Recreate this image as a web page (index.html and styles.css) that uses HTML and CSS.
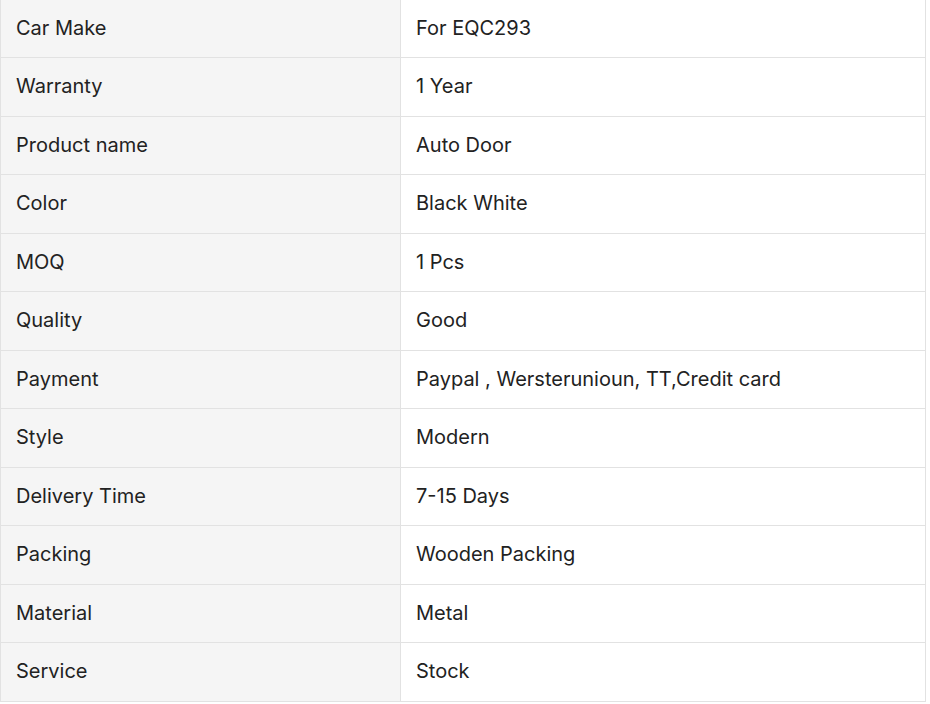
FILE: index.html
```html
<!DOCTYPE html>
<html>
<head>
<meta charset="utf-8">
<link rel="stylesheet" href="styles.css">
</head>
<body>
<table class="spec">
<tbody>
<tr><td class="k">Car Make</td><td class="v">For EQC293</td></tr>
<tr><td class="k">Warranty</td><td class="v">1 Year</td></tr>
<tr><td class="k">Product name</td><td class="v">Auto Door</td></tr>
<tr><td class="k">Color</td><td class="v">Black White</td></tr>
<tr><td class="k">MOQ</td><td class="v">1 Pcs</td></tr>
<tr><td class="k">Quality</td><td class="v">Good</td></tr>
<tr><td class="k">Payment</td><td class="v">Paypal , Wersterunioun, TT,Credit card</td></tr>
<tr><td class="k">Style</td><td class="v">Modern</td></tr>
<tr><td class="k">Delivery Time</td><td class="v">7-15 Days</td></tr>
<tr><td class="k">Packing</td><td class="v">Wooden Packing</td></tr>
<tr><td class="k">Material</td><td class="v">Metal</td></tr>
<tr><td class="k">Service</td><td class="v">Stock</td></tr>
</tbody>
</table>
</body>
</html>
```
FILE: styles.css
```css
html, body {
  margin: 0;
  padding: 0;
  background: #ffffff;
}
.spec {
  margin-top: -1.5px;
  width: 926px;
  border-collapse: collapse;
  font-family: Inter, "Noto Sans", sans-serif;
  font-size: 20px;
  color: #222222;
  table-layout: fixed;
}
.spec td {
  border: 1px solid #e2e2e2;
  padding: 15px 15px;
  height: 27.5px;
  line-height: 27.5px;
  vertical-align: middle;
  box-sizing: content-box;
}
.spec .k {
  width: 369px;
  background: #f5f5f5;
}
.spec .v {
  background: #ffffff;
}
```
